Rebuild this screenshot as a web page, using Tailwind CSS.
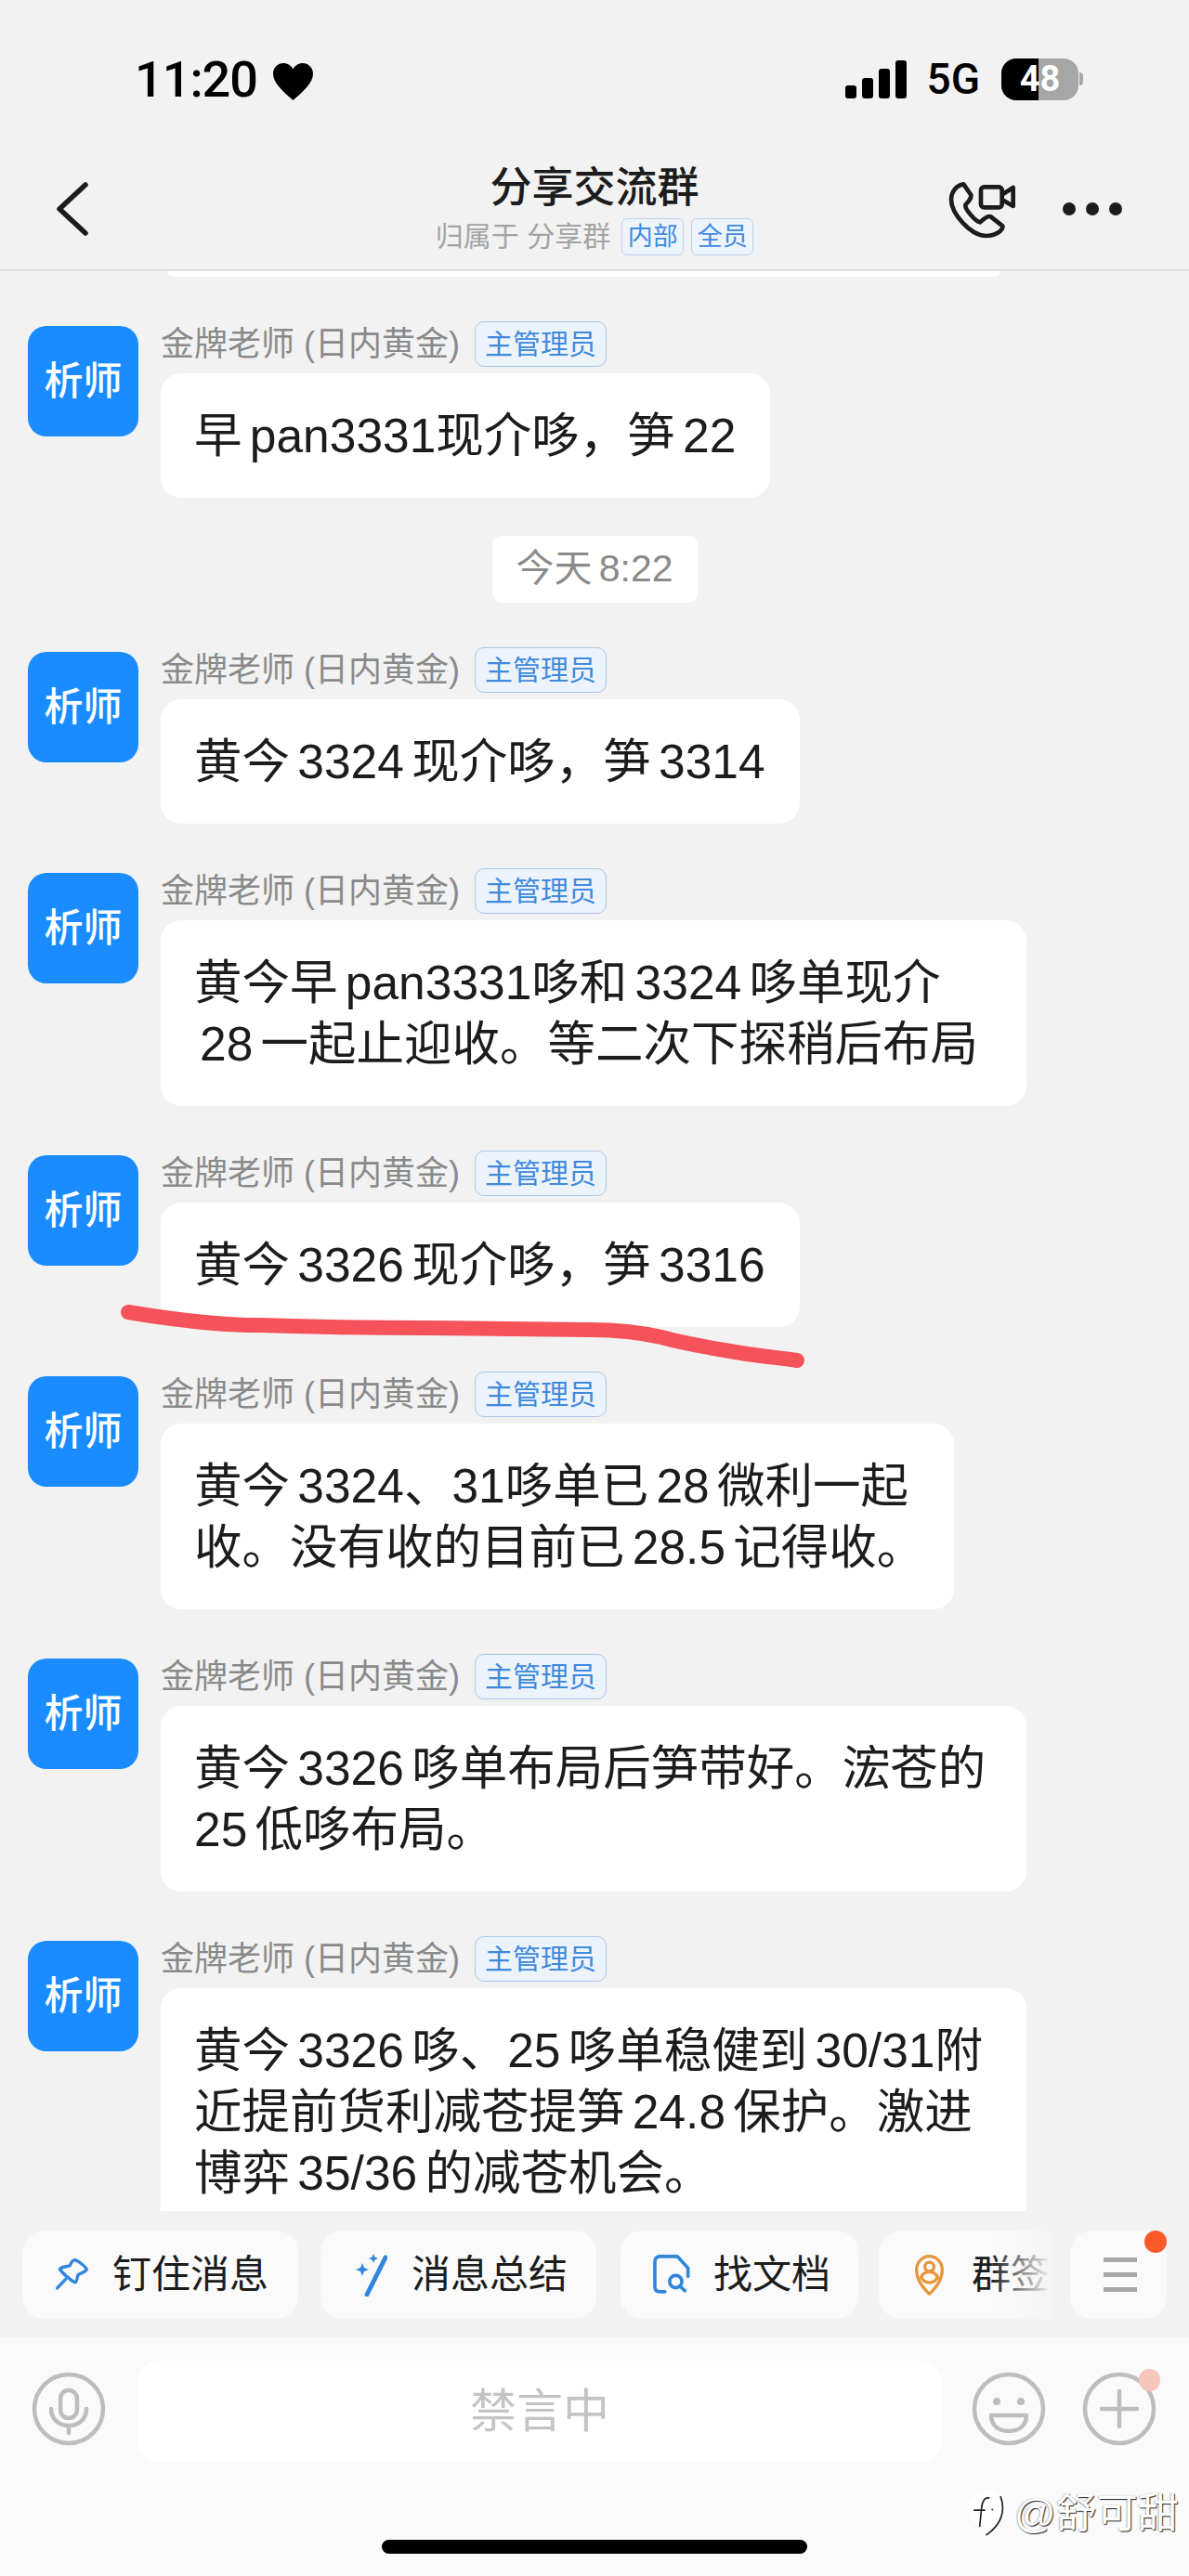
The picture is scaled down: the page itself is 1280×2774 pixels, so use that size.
<!DOCTYPE html>
<html lang="zh-CN">
<head>
  <meta charset="UTF-8" />
  <title>分享交流群</title>
  <script src="https://cdn.jsdelivr.net/npm/@tailwindcss/browser@4"></script>
</head>
<body class="bg-[#f2f2f2] text-[#1c1c1c] font-['Liberation_Sans','Noto_Sans_CJK_SC',sans-serif]">
<div class="relative w-[1280px] h-[2774px] overflow-hidden flex flex-col">

  <!-- status bar -->
  <div class="h-[172px] shrink-0 flex justify-between pt-[63px] pl-[145px] pr-[114px]">
    <div class="flex items-start gap-[17px]">
      <span class="font-['Roboto'] font-medium text-[54px] leading-[46px] tracking-[-1px] text-black">11:20</span>
      <svg class="w-[43px] h-[40px] mt-[5px]" viewBox="0 0 43 40"><path d="M21.5 40C10 30 0 21 0 11.500C0 4.500 5.500 0 11 0c4.500 0 8.500 2.500 10.500 6.500C23.500 2.500 27.500 0 32 0c5.500 0 11 4.500 11 11.500C43 21 33 30 21.500 40z" fill="#000"/></svg>
    </div>
    <div class="flex items-start">
      <div class="flex items-end gap-[6px] h-[41px] mt-[2px]">
        <div class="w-[12px] h-[14px] bg-black rounded-[3px]"></div>
        <div class="w-[12px] h-[22px] bg-black rounded-[3px]"></div>
        <div class="w-[12px] h-[32px] bg-black rounded-[3px]"></div>
        <div class="w-[12px] h-[41px] bg-black rounded-[3px]"></div>
      </div>
      <span class="font-['Roboto'] font-medium text-[46px] leading-[44px] ml-[22px] text-black">5G</span>
      <div class="relative w-[83px] h-[45px] ml-[23px] rounded-[16px] overflow-hidden bg-[#a6a6a6]">
        <div class="w-[40px] h-full bg-black"></div>
        <span class="absolute inset-0 text-center font-['Roboto'] font-bold text-[38px] leading-[45px] text-white">48</span>
      </div>
      <div class="w-[4px] h-[14px] mt-[15px] ml-[1px] bg-[#a6a6a6] rounded-r-full"></div>
    </div>
  </div>

  <!-- nav -->
  <div class="relative h-[120px] shrink-0 border-b-2 border-[#e0e0e0]">
    <svg class="absolute left-[58px] top-[22px] w-[40px] h-[62px]" viewBox="0 0 40 62" fill="none" stroke="#1c1c1c" stroke-width="5.500" stroke-linecap="round" stroke-linejoin="round"><path d="M34 5 6 31l28 26" /></svg>
    <div class="flex flex-col items-center">
      <h1 class="text-[45px] leading-[50px] mt-[6px] font-medium">分享交流群</h1>
      <div class="flex items-center mt-[7px]">
        <span class="text-[30px] leading-[40px] text-[#a3a3a3] mr-[12px]">归属于 分享群</span>
        <span class="w-[67px] h-[40px] flex items-center justify-center rounded-[6px] border border-[#bcd4ee] bg-[#eef4fb] text-[#3e8ade] text-[27px]">内部</span>
        <span class="w-[67px] h-[40px] ml-[8px] flex items-center justify-center rounded-[6px] border border-[#bcd4ee] bg-[#eef4fb] text-[#3e8ade] text-[27px]">全员</span>
      </div>
    </div>
    <svg class="absolute left-[1000px] top-[8px] w-[100px] h-[90px]" viewBox="0 0 300 270" fill="none" stroke="#1c1c1c" stroke-width="14" stroke-linecap="round" stroke-linejoin="round">
      <path d="M112 55C90 58 72 78 72 105 72 150 135 222 185 222 215 222 240 205 238 190L200 160C190 155 175 170 165 178 150 175 115 135 118 122 125 112 138 105 136 90z"/>
      <rect x="168" y="64" width="68" height="66" rx="10"/>
      <path d="M238 88 272 66V126L238 106"/>
    </svg>
    <div class="absolute left-[1144px] top-[46px] flex gap-[11px]">
      <div class="w-[14px] h-[14px] rounded-full bg-[#1c1c1c]"></div>
      <div class="w-[14px] h-[14px] rounded-full bg-[#1c1c1c]"></div>
      <div class="w-[14px] h-[14px] rounded-full bg-[#1c1c1c]"></div>
    </div>
  </div>

  <!-- messages -->
  <div class="relative h-[2089px] shrink-0 overflow-hidden">
    <div class="h-[6px] ml-[180px] w-[897px] bg-white rounded-b-[12px]"></div>

    <div class="flex flex-col pt-[48px]">
      <div class="flex pl-[30px] gap-[24px]">
        <div class="w-[119px] h-[119px] mt-[5px] rounded-[20px] bg-[#1a8cff] text-white text-[42px] font-medium flex items-center justify-center shrink-0">析师</div>
        <div class="flex flex-col items-start">
          <div class="flex items-center h-[49px] gap-[16px]"><span class="text-[36px] text-[#8a8a8a]">金牌老师 (日内黄金)</span><span class="px-[10px] h-[49px] flex items-center rounded-[10px] border border-[#a9c8e8] bg-[#edf3fa] text-[#3e8ade] text-[30px]">主管理员</span></div>
          <div class="mt-[7px] bg-white rounded-[22px] pl-[36px] pr-[37px] py-[34px] text-[51.5px] leading-[66px] [word-spacing:-6px]">早 pan3331现介哆，笋 22</div>
        </div>
      </div>

      <div class="self-center mt-[41px] mb-[48px] w-[221px] h-[72px] rounded-[10px] bg-white text-[#8a8a8a] text-[41px] [word-spacing:-4px] flex items-center justify-center">今天 8:22</div>

      <div class="flex pl-[30px] gap-[24px]">
        <div class="w-[119px] h-[119px] mt-[5px] rounded-[20px] bg-[#1a8cff] text-white text-[42px] font-medium flex items-center justify-center shrink-0">析师</div>
        <div class="flex flex-col items-start">
          <div class="flex items-center h-[49px] gap-[16px]"><span class="text-[36px] text-[#8a8a8a]">金牌老师 (日内黄金)</span><span class="px-[10px] h-[49px] flex items-center rounded-[10px] border border-[#a9c8e8] bg-[#edf3fa] text-[#3e8ade] text-[30px]">主管理员</span></div>
          <div class="mt-[7px] bg-white rounded-[22px] pl-[36px] pr-[37px] py-[34px] text-[51.5px] leading-[66px] [word-spacing:-6px]">黄今 3324 现介哆，笋 3314</div>
        </div>
      </div>

      <div class="flex pl-[30px] gap-[24px] mt-[48px]">
        <div class="w-[119px] h-[119px] mt-[5px] rounded-[20px] bg-[#1a8cff] text-white text-[42px] font-medium flex items-center justify-center shrink-0">析师</div>
        <div class="flex flex-col items-start">
          <div class="flex items-center h-[49px] gap-[16px]"><span class="text-[36px] text-[#8a8a8a]">金牌老师 (日内黄金)</span><span class="px-[10px] h-[49px] flex items-center rounded-[10px] border border-[#a9c8e8] bg-[#edf3fa] text-[#3e8ade] text-[30px]">主管理员</span></div>
          <div class="mt-[7px] w-[932px] bg-white rounded-[22px] pl-[36px] py-[34px] text-[51.5px] leading-[66px] whitespace-nowrap [word-spacing:-6px]">黄今早 pan3331哆和 3324 哆单现介<br><span class="ml-[6px]">28</span> 一起止迎收。等二次下探稍后布局</div>
        </div>
      </div>

      <div class="flex pl-[30px] gap-[24px] mt-[48px]">
        <div class="w-[119px] h-[119px] mt-[5px] rounded-[20px] bg-[#1a8cff] text-white text-[42px] font-medium flex items-center justify-center shrink-0">析师</div>
        <div class="flex flex-col items-start">
          <div class="flex items-center h-[49px] gap-[16px]"><span class="text-[36px] text-[#8a8a8a]">金牌老师 (日内黄金)</span><span class="px-[10px] h-[49px] flex items-center rounded-[10px] border border-[#a9c8e8] bg-[#edf3fa] text-[#3e8ade] text-[30px]">主管理员</span></div>
          <div class="mt-[7px] bg-white rounded-[22px] pl-[36px] pr-[37px] py-[34px] text-[51.5px] leading-[66px] [word-spacing:-6px]">黄今 3326 现介哆，笋 3316</div>
        </div>
      </div>

      <div class="flex pl-[30px] gap-[24px] mt-[48px]">
        <div class="w-[119px] h-[119px] mt-[5px] rounded-[20px] bg-[#1a8cff] text-white text-[42px] font-medium flex items-center justify-center shrink-0">析师</div>
        <div class="flex flex-col items-start">
          <div class="flex items-center h-[49px] gap-[16px]"><span class="text-[36px] text-[#8a8a8a]">金牌老师 (日内黄金)</span><span class="px-[10px] h-[49px] flex items-center rounded-[10px] border border-[#a9c8e8] bg-[#edf3fa] text-[#3e8ade] text-[30px]">主管理员</span></div>
          <div class="mt-[7px] w-[854px] bg-white rounded-[22px] pl-[36px] py-[34px] text-[51.5px] leading-[66px] whitespace-nowrap [word-spacing:-6px]">黄今 3324、31哆单已 28 微利一起<br>收。没有收的目前已 28.5 记得收。</div>
        </div>
      </div>

      <div class="flex pl-[30px] gap-[24px] mt-[48px]">
        <div class="w-[119px] h-[119px] mt-[5px] rounded-[20px] bg-[#1a8cff] text-white text-[42px] font-medium flex items-center justify-center shrink-0">析师</div>
        <div class="flex flex-col items-start">
          <div class="flex items-center h-[49px] gap-[16px]"><span class="text-[36px] text-[#8a8a8a]">金牌老师 (日内黄金)</span><span class="px-[10px] h-[49px] flex items-center rounded-[10px] border border-[#a9c8e8] bg-[#edf3fa] text-[#3e8ade] text-[30px]">主管理员</span></div>
          <div class="mt-[7px] w-[932px] bg-white rounded-[22px] pl-[36px] py-[34px] text-[51.5px] leading-[66px] whitespace-nowrap [word-spacing:-6px]">黄今 3326 哆单布局后笋带好。浤苍的<br>25 低哆布局。</div>
        </div>
      </div>

      <div class="flex pl-[30px] gap-[24px] mt-[48px]">
        <div class="w-[119px] h-[119px] mt-[5px] rounded-[20px] bg-[#1a8cff] text-white text-[42px] font-medium flex items-center justify-center shrink-0">析师</div>
        <div class="flex flex-col items-start">
          <div class="flex items-center h-[49px] gap-[16px]"><span class="text-[36px] text-[#8a8a8a]">金牌老师 (日内黄金)</span><span class="px-[10px] h-[49px] flex items-center rounded-[10px] border border-[#a9c8e8] bg-[#edf3fa] text-[#3e8ade] text-[30px]">主管理员</span></div>
          <div class="mt-[7px] w-[932px] bg-white rounded-[22px] pl-[36px] py-[34px] text-[51.5px] leading-[66px] whitespace-nowrap [word-spacing:-6px]">黄今 3326 哆、25 哆单稳健到 30/31附<br>近提前货利减苍提笋 24.8 保护。激进<br>博弈 35/36 的减苍机会。</div>
        </div>
      </div>
    </div>
  </div>

  <!-- quick actions -->
  <div class="relative h-[136px] shrink-0 pt-[21px] pl-[24px] flex gap-[24px]">
    <div class="w-[297px] h-[95px] rounded-[24px] bg-[#fafafa] flex items-center pl-[35px] shrink-0">
      <svg class="w-[37px] h-[37px] shrink-0" viewBox="58 34 110 110" fill="none" stroke="#2f86dc" stroke-width="10" stroke-linecap="round" stroke-linejoin="round"><path d="M122 42C132 44 156 62 160 72 158 80 142 84 132 90 130 100 128 114 122 114 108 106 84 86 74 72 76 64 94 64 106 60 110 52 114 42 122 42z"/><path d="M92 104 66 132"/></svg>
      <span class="text-[42px] ml-[25px]">钉住消息</span>
    </div>
    <div class="w-[297px] h-[95px] rounded-[24px] bg-[#fafafa] flex items-center pl-[38px] shrink-0">
      <svg class="w-[34px] h-[46px] shrink-0" viewBox="0 0 34 46" fill="none"><path d="M32 4 12 44" stroke="#2f86dc" stroke-width="5" stroke-linecap="round"/><path d="M7 10l2 5 5 2-5 2-2 5-2-5-5-2 5-2z" fill="#2f86dc"/><path d="M19 0l1.500 3.500L24 5l-3.500 1.500L19 10l-1.500-3.500L14 5l3.500-1.500z" fill="#2f86dc"/></svg>
      <span class="text-[42px] ml-[26px]">消息总结</span>
    </div>
    <div class="w-[256px] h-[95px] ml-[2px] rounded-[24px] bg-[#fafafa] flex items-center pl-[33px] shrink-0">
      <svg class="w-[43px] h-[45px] shrink-0" viewBox="60 22 130 135" fill="none" stroke="#2f86dc" stroke-width="11" stroke-linecap="round" stroke-linejoin="round"><path d="M105 145H88C78 145 72 139 72 128V48C72 37 78 30 88 30H145L180 68V95"/><circle cx="140" cy="112" r="20"/><path d="m155 128 15 14"/></svg>
      <span class="text-[42px] ml-[24px]">找文档</span>
    </div>
    <div class="relative w-[186px] h-[95px] ml-[-2px] rounded-l-[24px] bg-[#fafafa] flex items-center pl-[36px] shrink-0">
      <svg class="w-[37px] h-[44px] shrink-0" viewBox="0 0 38 54" fill="none" stroke="#e8963a" stroke-width="4" stroke-linejoin="round"><path d="M19 52C8 41 2 32 2 20 2 10 10 2 19 2s17 8 17 18c0 12-6 21-17 32z"/><circle cx="19" cy="16" r="6"/><path d="M8 30c2-5 6-7 11-7s9 2 11 7c-3 5-7 7-11 7s-8-2-11-7z"/></svg>
      <span class="text-[42px] ml-[27px] whitespace-nowrap">群签</span>
      <div class="absolute right-0 top-0 h-full w-[66px] bg-gradient-to-r from-[#fafafa]/0 to-[#f4f4f4]"></div>
    </div>
    <div class="absolute left-[1152px] top-[21px] w-[104px] h-[95px] pl-[4px] rounded-[24px] bg-[#fafafa] flex flex-col items-center justify-center gap-[11px]">
      <div class="w-[36px] h-[5px] bg-[#a8a8a8]"></div>
      <div class="w-[36px] h-[5px] bg-[#a8a8a8]"></div>
      <div class="w-[36px] h-[5px] bg-[#a8a8a8]"></div>
    </div>
    <div class="absolute left-[1232px] top-[21px] w-[24px] h-[24px] rounded-full bg-[#fa5a2a]"></div>
  </div>

  <!-- input bar -->
  <div class="relative flex-1 bg-[#fafafa]">
    <div class="flex items-start pt-[25px]">
      <svg class="w-[80px] h-[80px] ml-[34px] mt-[12px]" viewBox="0 0 80 80" fill="none" stroke="#bdbdbd" stroke-width="4.500" stroke-linecap="round"><circle cx="40" cy="40" r="37"/><rect x="31" y="20" width="18" height="30" rx="9"/><path d="M21 40c0 11 8 18 19 18s19-7 19-18M40 58v8"/></svg>
      <div class="ml-[35px] w-[864px] h-[110px] rounded-[22px] bg-white text-[#c4c4c4] text-[50px] flex items-center justify-center">禁言中</div>
      <svg class="w-[80px] h-[80px] ml-[33px] mt-[12px]" viewBox="0 0 80 80" fill="none" stroke="#bdbdbd" stroke-width="4.500" stroke-linejoin="round"><circle cx="40" cy="40" r="37"/><circle cx="27" cy="32" r="4" fill="#bdbdbd" stroke="none"/><circle cx="53" cy="32" r="4" fill="#bdbdbd" stroke="none"/><path d="M21 47h38c0 11-8 17-19 17s-19-6-19-17z"/></svg>
      <svg class="w-[80px] h-[80px] ml-[39px] mt-[12px]" viewBox="0 0 80 80" fill="none" stroke="#bdbdbd" stroke-width="4.500" stroke-linecap="round"><circle cx="40" cy="40" r="37"/><path d="M21 40h38M40 21v38"/></svg>
    </div>
    <div class="absolute left-[1226px] top-[34px] w-[23px] h-[24px] rounded-full bg-[#f7c6ba]"></div>
    <div class="absolute left-[411px] top-[218px] w-[458px] h-[15px] rounded-full bg-black"></div>
    <!-- watermark -->
    <div class="absolute left-[1040px] top-[163px] flex items-center gap-[6px]">
      <svg class="w-[46px] h-[53px]" viewBox="0 30 138 160"><ellipse cx="70" cy="95" rx="62" ry="62" fill="#fff"/><g fill="none" stroke="#222" stroke-width="5" stroke-linecap="round"><path d="M74 60C58 58 52 74 50 92L44 152"/><path d="M26 100H60"/><path d="M112 56C128 100 116 146 66 180"/></g><circle cx="85" cy="98" r="3" fill="#222"/></svg>
      <span class="text-[44px] leading-[50px] text-white [text-shadow:1px_1px_1px_#222,-1px_0_1px_#bbb]">@舒可甜</span>
    </div>
  </div>

  <!-- red marker stroke drawn over the chat -->
  <svg class="absolute left-0 top-0 w-[1280px] h-[2774px] pointer-events-none" viewBox="0 0 1280 2774" fill="none"><path d="M138 1413C180 1420 230 1427 279 1427 340 1429 400 1430 457 1430 520 1431 580 1431 636 1432 665 1432 690 1435 712 1440 745 1449 775 1453 804 1458 825 1461 845 1463 858 1465" stroke="#f6525a" stroke-width="16" stroke-linecap="round"/></svg>
</div>
</body>
</html>
